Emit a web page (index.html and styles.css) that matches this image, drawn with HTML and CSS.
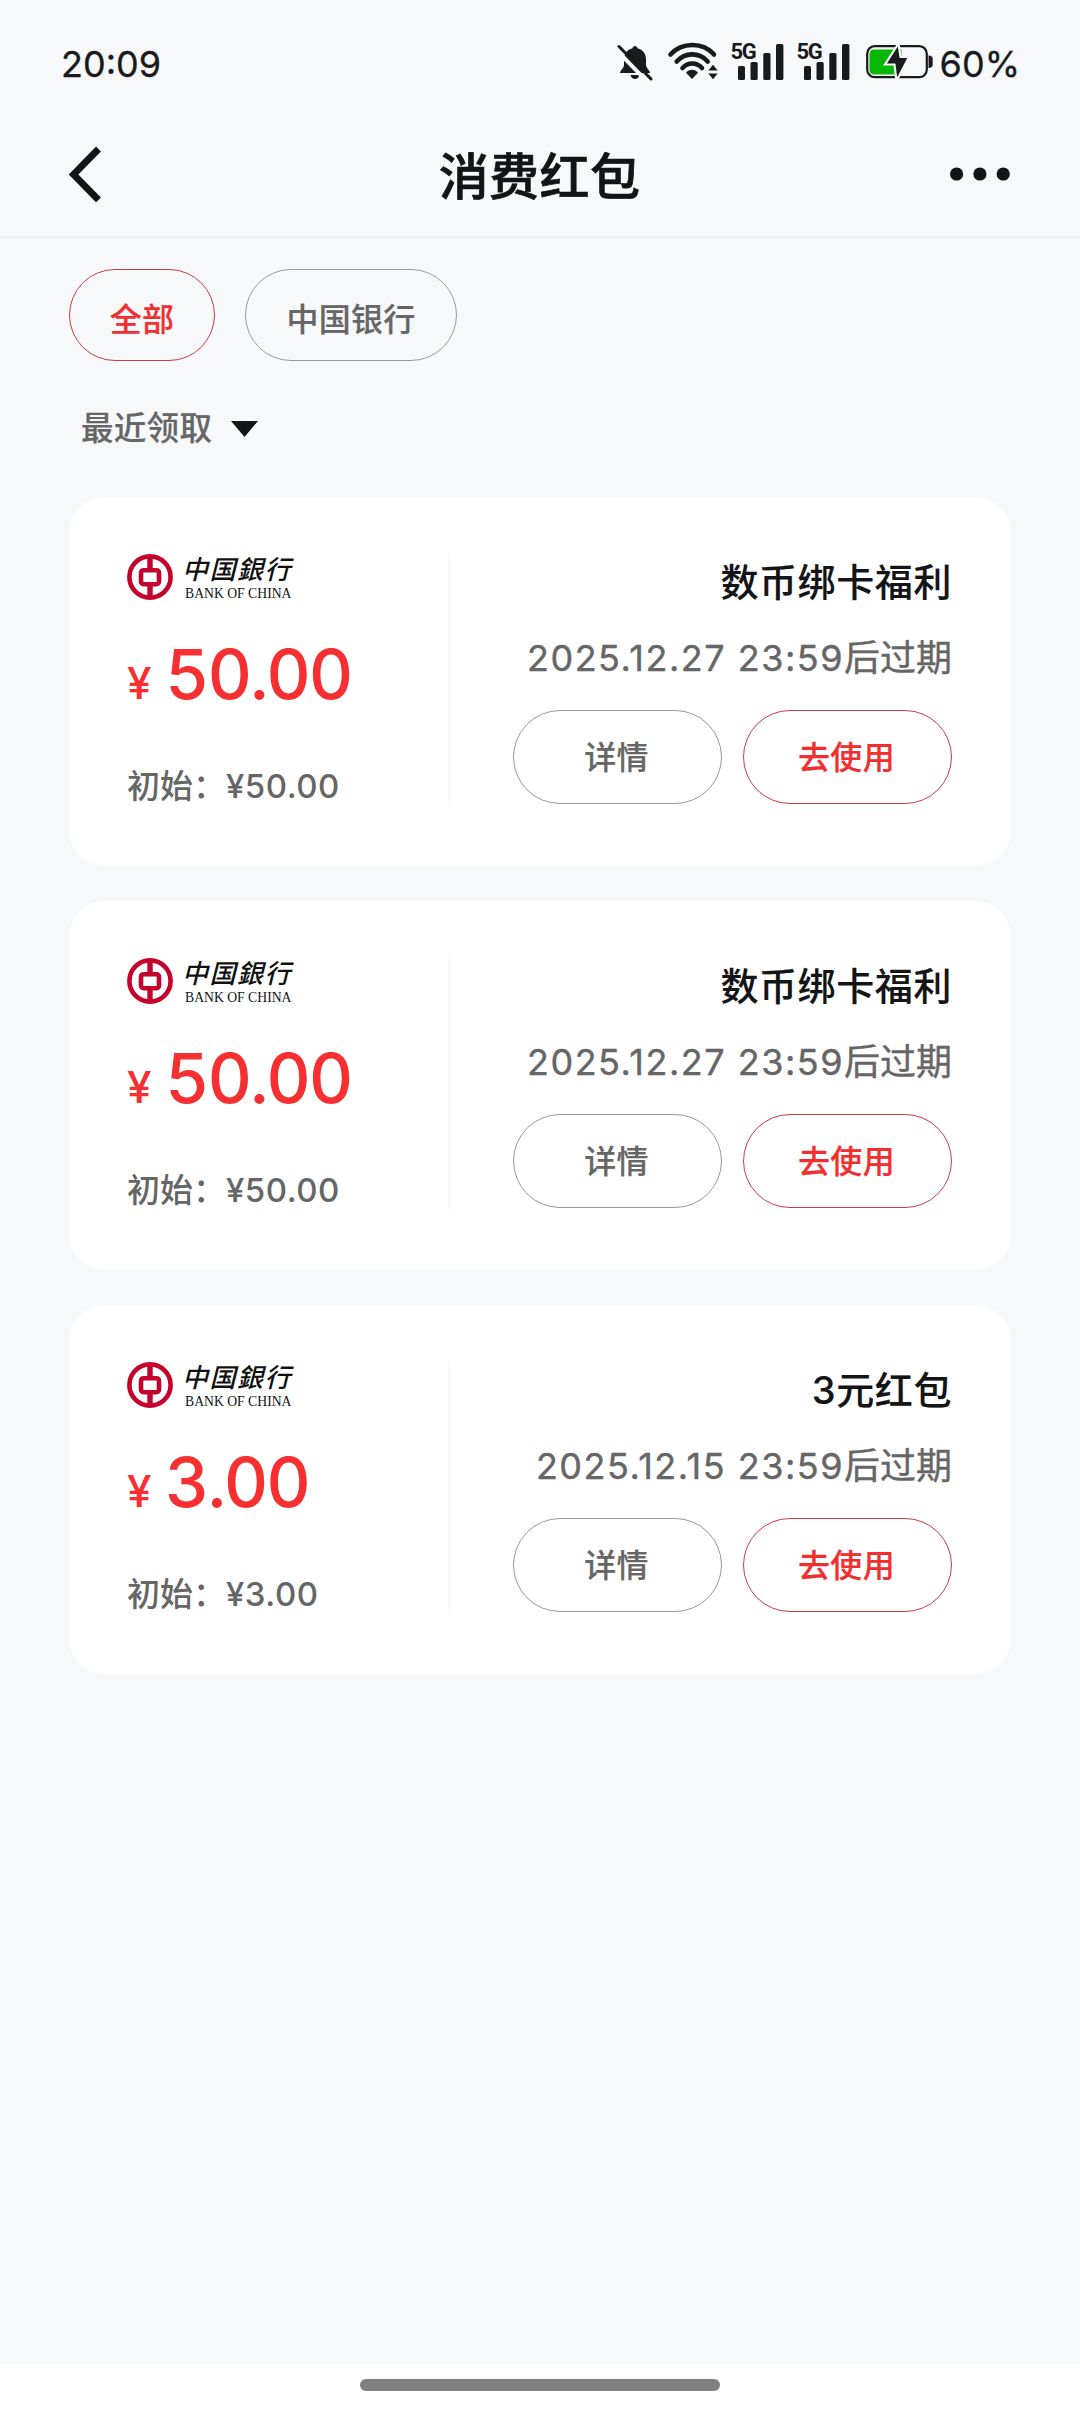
FILE: index.html
```html
<!DOCTYPE html>
<html lang="zh-CN">
<head>
<meta charset="utf-8">
<title>消费红包</title>
<link rel="stylesheet" href="styles.css">
</head>
<body>
<svg class="defs" width="0" height="0" aria-hidden="true">
  <symbol id="signal" viewBox="0 0 54 40">
    <rect x="7" y="24" width="7" height="14" rx="1.6"/>
    <rect x="19.5" y="20" width="7.2" height="18" rx="1.6"/>
    <rect x="32.3" y="11" width="7.2" height="27" rx="1.6"/>
    <rect x="45" y="2" width="7.4" height="36" rx="1.6"/>
  </symbol>
  <symbol id="boc" viewBox="0 0 46 46">
    <circle cx="23" cy="23" r="20.6" fill="none" stroke="#c4022b" stroke-width="4.6"/>
    <path d="M23 3v12M23 31v12" stroke="#c4022b" stroke-width="5.4"/>
    <rect x="14" y="16.2" width="18" height="14" rx="2.6" fill="none" stroke="#c4022b" stroke-width="4.6"/>
  </symbol>
</svg>
<div class="screen">
  <header class="status">
    <span class="time">20:09</span>
    <div class="status-icons">
      <svg class="bell" viewBox="0 0 36 38" width="36" height="38">
        <path d="M18 3c1.400 0 2.300 1 2.500 2.200C26 6.600 29 11 29 16.500V22c0 3 4 5.500 4 8H3c0-2.500 4-5 4-8v-5.500C7 11 10 6.600 15.500 5.200 15.700 4 16.600 3 18 3z" fill="#191a1c"/>
        <path d="M13.500 32h9c-.6 2.400-2.200 4-4.500 4s-3.900-1.600-4.500-4z" fill="#191a1c"/>
        <path d="M0 5.500l33 34" stroke="#f7f8fa" stroke-width="4" transform="translate(-1.500 .5)"/>
        <path d="M2 3.500l32 32.500" stroke="#191a1c" stroke-width="3" stroke-linecap="round"/>
      </svg>
      <svg class="wifi" viewBox="0 0 52 38" width="52" height="38">
        <g fill="none" stroke="#191a1c" stroke-width="4.600" stroke-linecap="round">
          <path d="M3.500 12.500C15-.2 36-.2 47 12.500"/>
          <path d="M9.700 19.500c8.500-9.500 22.500-9.500 31 0"/>
          <path d="M15.500 26c5.500-6 14-6 19.500 0"/>
        </g>
        <path d="M25 37l-6-6.200c2.500-4.200 9.500-4.200 12 0z" fill="#191a1c"/>
        <path d="M46 22l5.500 7h-11zM46 38l5.500-7h-11z" fill="#191a1c" stroke="#f7f8fa" stroke-width="1"/>
      </svg>
      <div class="cell"><svg width="54" height="40"><use href="#signal"/></svg><span class="gen">5G</span></div>
      <div class="cell"><svg width="54" height="40"><use href="#signal"/></svg><span class="gen">5G</span></div>
      <svg class="battery" viewBox="0 0 68 40" width="68" height="40">
        <rect x="2.200" y="5.200" width="59.600" height="31" rx="7.500" fill="#f7f8fa" stroke="#191a1c" stroke-width="2.200"/>
        <path d="M63.500 14.500c3 0 4.200 1.500 4.200 3.500v5.500c0 2-1.200 3.500-4.200 3.500z" fill="#191a1c"/>
        <path d="M9 8.500h27.500v25H9c-3 0-4.500-2-4.500-4.500V13c0-2.500 1.500-4.500 4.500-4.500z" fill="#06b806"/>
        <path d="M33.500 2.500L20 23.500h9.500L31.500 40 44 16h-8.500z" fill="#191a1c" stroke="#f7f8fa" stroke-width="2.200"/>
      </svg>
      <span class="percent">60%</span>
    </div>
  </header>

  <nav class="nav">
    <svg viewBox="0 0 34 56" width="34" height="56"><path d="M30.500 3L5.500 28.500 30.500 54" fill="none" stroke="#131415" stroke-width="6.800"/></svg>
    <h1 class="nav-title">消费红包</h1>
    <svg viewBox="0 0 60 14" width="60" height="14" fill="#131415"><circle cx="6.600" cy="7" r="6.600"/><circle cx="29.900" cy="7" r="6.600"/><circle cx="53.200" cy="7" r="6.600"/></svg>
  </nav>

  <main class="content">
    <div class="chips">
      <button class="pill pill-red chip">全部</button>
      <button class="pill chip">中国银行</button>
    </div>
    <div class="sort"><span class="sort-label">最近领取</span><svg viewBox="0 0 27 16" width="27" height="16"><path d="M0 0h27L13.500 16z" fill="#131415"/></svg></div>

    <section class="card">
      <div class="value">
        <div class="bank"><svg width="46" height="46"><use href="#boc"/></svg><div class="bank-name"><span class="bank-cn">中国銀行</span><span class="bank-en">BANK OF CHINA</span></div></div>
        <div class="amount"><span class="yen">¥</span>50.00</div>
        <div class="initial">初始：<span class="initial-sum">¥50.00</span></div>
      </div>
      <div class="info">
        <h2 class="name">数币绑卡福利</h2>
        <p class="expiry"><span class="date">2025.12.27 23:59</span>后过期</p>
        <div class="actions"><button class="pill">详情</button><button class="pill pill-red">去使用</button></div>
      </div>
    </section>

    <section class="card">
      <div class="value">
        <div class="bank"><svg width="46" height="46"><use href="#boc"/></svg><div class="bank-name"><span class="bank-cn">中国銀行</span><span class="bank-en">BANK OF CHINA</span></div></div>
        <div class="amount"><span class="yen">¥</span>50.00</div>
        <div class="initial">初始：<span class="initial-sum">¥50.00</span></div>
      </div>
      <div class="info">
        <h2 class="name">数币绑卡福利</h2>
        <p class="expiry"><span class="date">2025.12.27 23:59</span>后过期</p>
        <div class="actions"><button class="pill">详情</button><button class="pill pill-red">去使用</button></div>
      </div>
    </section>

    <section class="card">
      <div class="value">
        <div class="bank"><svg width="46" height="46"><use href="#boc"/></svg><div class="bank-name"><span class="bank-cn">中国銀行</span><span class="bank-en">BANK OF CHINA</span></div></div>
        <div class="amount"><span class="yen">¥</span>3.00</div>
        <div class="initial">初始：<span class="initial-sum">¥3.00</span></div>
      </div>
      <div class="info">
        <h2 class="name">3元红包</h2>
        <p class="expiry"><span class="date">2025.12.15 23:59</span>后过期</p>
        <div class="actions"><button class="pill">详情</button><button class="pill pill-red">去使用</button></div>
      </div>
    </section>
  </main>

  <footer class="gesture"><div class="gesture-bar"></div></footer>
</div>
</body>
</html>
```
FILE: styles.css
```css
* { box-sizing: border-box; margin: 0; padding: 0; }
body {
  background: #f7f8fa;
  color: #131415;
  font-family: Inter, "Noto Sans CJK SC", sans-serif;
}
.defs { display: block; height: 0; }
.screen { width: 1080px; height: 2412px; display: flex; flex-direction: column; }

/* system status bar */
.status {
  height: 112px;
  padding: 40px 60px 0 61px;
  display: flex;
  justify-content: space-between;
  align-items: flex-start;
  color: #191a1c;
}
.time, .percent { font-size: 36px; line-height: 48px; white-space: nowrap; -webkit-text-stroke: .3px; }
.status-icons { display: flex; align-items: flex-start; fill: #191a1c; }
.bell { margin: 3px 14px 0 0; }
.wifi { margin: 2px 12px 0 0; }
.cell { position: relative; width: 54px; height: 40px; margin: 2px 12px 0 0; }
.cell svg { display: block; }
.gen {
  position: absolute; left: 0; top: 1px;
  font: 700 22px/18px Roboto, sans-serif;
  letter-spacing: -1.5px;
}
.battery { margin: 1px 7px 0 2px; }

/* page header */
.nav {
  height: 127px;
  padding: 0 70px 0 68px;
  border-bottom: 3px solid #f0f1f3;
  display: flex;
  align-items: center;
  justify-content: space-between;
}
.nav-title {
  font-size: 50px;
  line-height: 60px;
  font-weight: 500;
  letter-spacing: .4px;
  margin: 5px 0 0 27px;
  -webkit-text-stroke: .7px;
}

.content { flex: 1; padding: 30px 69px 0; }
.pill {
  height: 94px;
  border: 1.5px solid #98999b;
  border-radius: 48px;
  background: transparent;
  color: #666;
  font: 500 32px/40px Inter, "Noto Sans CJK SC", sans-serif;
  letter-spacing: .3px;
  padding: 2px 2px 0 0;
  white-space: nowrap;
  -webkit-text-stroke: .2px;
}
.pill-red { border-color: #d03a46; color: #f12f31; }
.chips { display: flex; gap: 30px; }
.chip { height: 92px; padding: 10px 0 0; width: 212px; }
.chip:first-child { width: 146px; }
.sort {
  display: flex;
  align-items: center;
  gap: 19px;
  height: 40px;
  margin: 48px 0 48px 12px;
  color: #666;
  font-size: 32.500px;
  line-height: 40px;
  font-weight: 500;
  -webkit-text-stroke: .2px;
}
.sort-label { letter-spacing: .3px; }

/* coupon cards */
.card {
  height: 369px;
  margin-bottom: 35px;
  padding: 56px 59px 60px 58px;
  border-radius: 36px;
  background: #fff;
  display: flex;
}
.value { width: 324px; border-right: 3px solid #f9fafa; }
.bank { display: flex; height: 48px; padding-top: 1px; gap: 11px; }
.bank-name { color: #111; display: flex; flex-direction: column; white-space: nowrap; }
.bank-cn {
  font: italic 500 26px/28px "Noto Sans CJK SC", sans-serif;
  letter-spacing: 1.500px;
  margin-left: -2px;
}
.bank-en { font: 13.700px/14px "Liberation Serif", serif; margin: 5px 0 0 1px; }
.amount {
  margin-top: 38px;
  color: #f62f30;
  font-size: 69px;
  line-height: 70px;
  font-weight: 550;
  font-variant-numeric: tabular-nums;
  letter-spacing: -2.2px;
  white-space: nowrap;
}
.yen {
  display: inline-block;
  width: 38px;
  font-size: 44px;
  font-weight: 500;
  font-variant-numeric: normal;
  letter-spacing: 0;
}
.initial {
  margin-top: 48px;
  font-size: 33px;
  line-height: 40px;
  font-weight: 500;
  color: #666;
  white-space: nowrap;
}
.initial-sum { letter-spacing: .5px; }
.info { flex: 1; display: flex; flex-direction: column; align-items: flex-end; }
.name { margin-top: 9px; font-size: 38px; line-height: 40px; font-weight: 500; letter-spacing: .6px; -webkit-text-stroke: .15px; }
.expiry {
  margin-top: 36px;
  font-size: 36px;
  line-height: 40px;
  color: #666;
  white-space: nowrap;
  -webkit-text-stroke: .4px;
}
.date { letter-spacing: 1.5px; }
.actions { display: flex; gap: 21px; margin-top: 32px; }
.actions .pill { width: 209px; }

/* gesture navigation area */
.gesture { height: 48px; background: #fff; padding-top: 15px; }
.gesture-bar { width: 360px; height: 12px; margin: 0 auto; border-radius: 6px; background: #808080; }
```
